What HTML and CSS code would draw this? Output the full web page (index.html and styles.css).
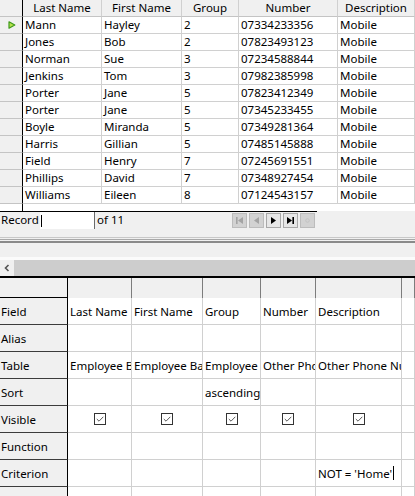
FILE: index.html
```html
<!DOCTYPE html>
<html>
<head>
<meta charset="utf-8">
<title>Query Design</title>
<link rel="stylesheet" href="styles.css">
</head>
<body>
<div class="data">
  <div class="tgrid">
    <div class="rh hd"></div><div class="hd">Last Name</div><div class="hd">First Name</div><div class="hd">Group</div><div class="hd">Number</div><div class="hd">Description</div>

    <div class="rh"><svg class="cur" width="8" height="8" viewBox="0 0 8 8"><polygon points="1,0.8 6.8,4 1,7.2" fill="#b6e04c" stroke="#3f9a1c" stroke-width="1.2" stroke-linejoin="round"/></svg></div><div class="c">Mann</div><div class="c">Hayley</div><div class="c">2</div><div class="c">07334233356</div><div class="c">Mobile</div>
    <div class="rh"></div><div class="c">Jones</div><div class="c">Bob</div><div class="c">2</div><div class="c">07823493123</div><div class="c">Mobile</div>
    <div class="rh"></div><div class="c">Norman</div><div class="c">Sue</div><div class="c">3</div><div class="c">07234588844</div><div class="c">Mobile</div>
    <div class="rh"></div><div class="c">Jenkins</div><div class="c">Tom</div><div class="c">3</div><div class="c">07982385998</div><div class="c">Mobile</div>
    <div class="rh"></div><div class="c">Porter</div><div class="c">Jane</div><div class="c">5</div><div class="c">07823412349</div><div class="c">Mobile</div>
    <div class="rh"></div><div class="c">Porter</div><div class="c">Jane</div><div class="c">5</div><div class="c">07345233455</div><div class="c">Mobile</div>
    <div class="rh"></div><div class="c">Boyle</div><div class="c">Miranda</div><div class="c">5</div><div class="c">07349281364</div><div class="c">Mobile</div>
    <div class="rh"></div><div class="c">Harris</div><div class="c">Gillian</div><div class="c">5</div><div class="c">07485145888</div><div class="c">Mobile</div>
    <div class="rh"></div><div class="c">Field</div><div class="c">Henry</div><div class="c">7</div><div class="c">07245691551</div><div class="c">Mobile</div>
    <div class="rh"></div><div class="c">Phillips</div><div class="c">David</div><div class="c">7</div><div class="c">07348927454</div><div class="c">Mobile</div>
    <div class="rh"></div><div class="c">Williams</div><div class="c">Eileen</div><div class="c">8</div><div class="c">07124543157</div><div class="c">Mobile</div>
  </div>
  <div class="filler"><div class="filler-rh"></div></div>
  <div class="recbar">
    <div class="rec">
      <span class="lbl">Record</span>
      <span class="recinput"><span class="caret"></span></span>
      <span class="of">of 11</span>
      <div class="nav">
        <span class="btn off"><svg width="13" height="13" viewBox="0 0 13 13"><rect x="3" y="3" width="1.6" height="7" fill="#a4a4a4"/><polygon points="10,3 5,6.5 10,10" fill="#a4a4a4"/></svg></span>
        <span class="btn off"><svg width="13" height="13" viewBox="0 0 13 13"><polygon points="9,3 4,6.5 9,10" fill="#a4a4a4"/></svg></span>
        <span class="btn on"><svg width="13" height="13" viewBox="0 0 13 13"><polygon points="4,3 9,6.5 4,10" fill="#000"/></svg></span>
        <span class="btn on"><svg width="13" height="13" viewBox="0 0 13 13"><polygon points="3,3 8,6.5 3,10" fill="#000"/><rect x="8.4" y="3" width="1.6" height="7" fill="#000"/></svg></span>
        <span class="btn off"><svg width="13" height="13" viewBox="0 0 13 13"><circle cx="6.5" cy="6.5" r="1.8" fill="none" stroke="#c4c4c4" stroke-width="1"/></svg></span>
      </div>
    </div>
    <div class="rec-rest"></div>
  </div>
</div>

<div class="split">
  <div class="line l1"></div>
  <div class="line l2"></div>
  <div class="line l3"></div>
  <div class="split-fill"></div>
  <div class="split-hi"></div>
</div>

<div class="hscroll">
  <span class="sarrow"><svg width="8" height="10" viewBox="0 0 8 10"><polyline points="5.5,2 2.5,5 5.5,8" fill="none" stroke="#555" stroke-width="1.6"/></svg></span>
  <span class="strack"></span>
</div>

<div class="design">
  <div class="lh"></div><div class="dh"></div><div class="dh"></div><div class="dh"></div><div class="dh"></div><div class="dh"></div><div class="dh"></div>

  <div class="lab">Field</div><div class="dc">Last Name</div><div class="dc">First Name</div><div class="dc">Group</div><div class="dc">Number</div><div class="dc">Description</div><div class="dc"></div>
  <div class="lab">Alias</div><div class="dc"></div><div class="dc"></div><div class="dc"></div><div class="dc"></div><div class="dc"></div><div class="dc"></div>
  <div class="lab">Table</div><div class="dc">Employee B</div><div class="dc">Employee Ba</div><div class="dc">Employee</div><div class="dc">Other Pho</div><div class="dc">Other Phone Nu</div><div class="dc"></div>
  <div class="lab">Sort</div><div class="dc"></div><div class="dc"></div><div class="dc">ascending</div><div class="dc"></div><div class="dc"></div><div class="dc"></div>
  <div class="lab">Visible</div>
  <div class="dc mid"><span class="cb"><svg width="10" height="10" viewBox="0 0 10 10"><polyline points="1.8,5 4,7.2 8.3,2.8" fill="none" stroke="#5a5a5a" stroke-width="1"/></svg></span></div>
  <div class="dc mid"><span class="cb"><svg width="10" height="10" viewBox="0 0 10 10"><polyline points="1.8,5 4,7.2 8.3,2.8" fill="none" stroke="#5a5a5a" stroke-width="1"/></svg></span></div>
  <div class="dc mid"><span class="cb"><svg width="10" height="10" viewBox="0 0 10 10"><polyline points="1.8,5 4,7.2 8.3,2.8" fill="none" stroke="#5a5a5a" stroke-width="1"/></svg></span></div>
  <div class="dc mid"><span class="cb"><svg width="10" height="10" viewBox="0 0 10 10"><polyline points="1.8,5 4,7.2 8.3,2.8" fill="none" stroke="#5a5a5a" stroke-width="1"/></svg></span></div>
  <div class="dc mid"><span class="cb"><svg width="10" height="10" viewBox="0 0 10 10"><polyline points="1.8,5 4,7.2 8.3,2.8" fill="none" stroke="#5a5a5a" stroke-width="1"/></svg></span></div>
  <div class="dc"></div>
  <div class="lab">Function</div><div class="dc"></div><div class="dc"></div><div class="dc"></div><div class="dc"></div><div class="dc"></div><div class="dc"></div>
  <div class="lab">Criterion</div><div class="dc"></div><div class="dc"></div><div class="dc"></div><div class="dc"></div><div class="dc">NOT = 'Home'<span class="tcaret"></span></div><div class="dc"></div>
  <div class="lab"></div><div class="dc"></div><div class="dc"></div><div class="dc"></div><div class="dc"></div><div class="dc"></div><div class="dc"></div>
</div>
</body>
</html>
```

FILE: styles.css
```css
* { box-sizing: border-box; }
html, body {
  margin: 0;
  padding: 0;
  width: 415px;
  height: 496px;
  overflow: hidden;
  background: #f0f0f0;
  font-family: "Noto Sans", "Open Sans", sans-serif;
  font-size: 11.5px;
  color: #000;
}

/* ---------- top data grid ---------- */
.tgrid {
  display: grid;
  grid-template-columns: 23px 79px 80px 57px 99px 77px;
  grid-auto-rows: 17px;
  background: #fff;
}
.tgrid > div {
  border-right: 1px solid #d0d0d0;
  border-bottom: 1px solid #d0d0d0;
  white-space: nowrap;
  overflow: hidden;
  line-height: 16px;
  padding-left: 2px;
}
.tgrid .hd {
  background: #f0f0f0;
  text-align: center;
  padding-left: 0;
  border-bottom-color: #c4c4c4;
}
.tgrid .rh {
  background: #f0f0f0;
  border-right: 1px solid #000;
  border-bottom-color: #c4c4c4;
  display: flex;
  align-items: center;
  padding-left: 8px;
}
.cur { display: block; }

.filler {
  height: 7px;
  background: #fff;
  display: flex;
}
.filler-rh {
  width: 23px;
  border-right: 1px solid #000;
}

.recbar {
  height: 18px;
  display: flex;
}
.rec {
  width: 317px;
  border-top: 1px solid #000;
  background: #f0f0f0;
  display: flex;
  align-items: stretch;
}
.rec-rest { flex: 1; background: #f0f0f0; }
.lbl {
  padding-left: 1px;
  width: 40px;
  line-height: 16px;
}
.recinput {
  width: 55px;
  background: #fff;
  border-right: 1px solid #6a6a6a;
  display: flex;
  align-items: center;
  padding-left: 1px;
}
.caret {
  width: 1px;
  height: 12px;
  background: #000;
}
.of {
  padding-left: 2px;
  line-height: 16px;
  width: 137px;
}
.nav {
  display: flex;
  gap: 2px;
  align-items: flex-start;
  padding-top: 1px;
}
.btn {
  width: 15px;
  height: 15px;
  display: flex;
  align-items: center;
  justify-content: center;
  border: 1px solid #bcbcbc;
}
.btn.off { background: #d2d2d2; }
.btn.on { background: #e6e6e6; border-color: #a8a8a8; }
.btn svg { display: block; }

/* ---------- splitter ---------- */
.split {
  height: 31px;
  display: flex;
  flex-direction: column;
  padding-top: 8px;
  background: #f0f0f0;
}
.line { height: 1px; flex: none; }
.l1 { background: #c8c8c8; margin-bottom: 1px; }
.l2 { background: #a8a8a8; margin-bottom: 1px; }
.l3 { background: #8a8a8a; height: 2px; }
.split-fill { flex: 1; }
.split-hi { height: 3px; background: #fbfbfb; flex: none; }

/* ---------- horizontal scrollbar ---------- */
.hscroll {
  height: 16px;
  display: flex;
}
.sarrow {
  width: 14px;
  background: #f0f0f0;
  display: flex;
  align-items: center;
  justify-content: center;
}
.sarrow svg { display: block; }
.strack { flex: 1; background: #cdcdcd; }

/* ---------- query design grid ---------- */
.design {
  border-top: 2px solid #000;
  display: grid;
  grid-template-columns: 68px 64px 71px 58px 55px 86px 13px;
  grid-template-rows: 20px;
  grid-auto-rows: 27px;
  background: #fff;
}
.design > div {
  white-space: nowrap;
  overflow: hidden;
  display: flex;
  align-items: center;
}
.lh {
  background: #f0f0f0;
  border-right: 1px solid #000;
  border-bottom: 1px solid #000;
}
.dh {
  background: #f0f0f0;
  border-right: 1px solid #7c7c7c;
}
.lab {
  background: #f0f0f0;
  border-right: 1px solid #000;
  border-bottom: 1px solid #3c3c3c;
  padding-left: 1px;
}
.dc {
  border-right: 1px solid #d0d0d0;
  border-bottom: 1px solid #d0d0d0;
  padding-left: 2px;
}
.dc.mid { justify-content: center; padding-left: 0; }
.cb {
  width: 12px;
  height: 12px;
  border: 1px solid #333;
  background: #fff;
  display: flex;
  align-items: center;
  justify-content: center;
}
.cb svg { display: block; }
.tcaret {
  display: inline-block;
  width: 1px;
  height: 14px;
  background: #000;
  margin-left: 1px;
}
```
